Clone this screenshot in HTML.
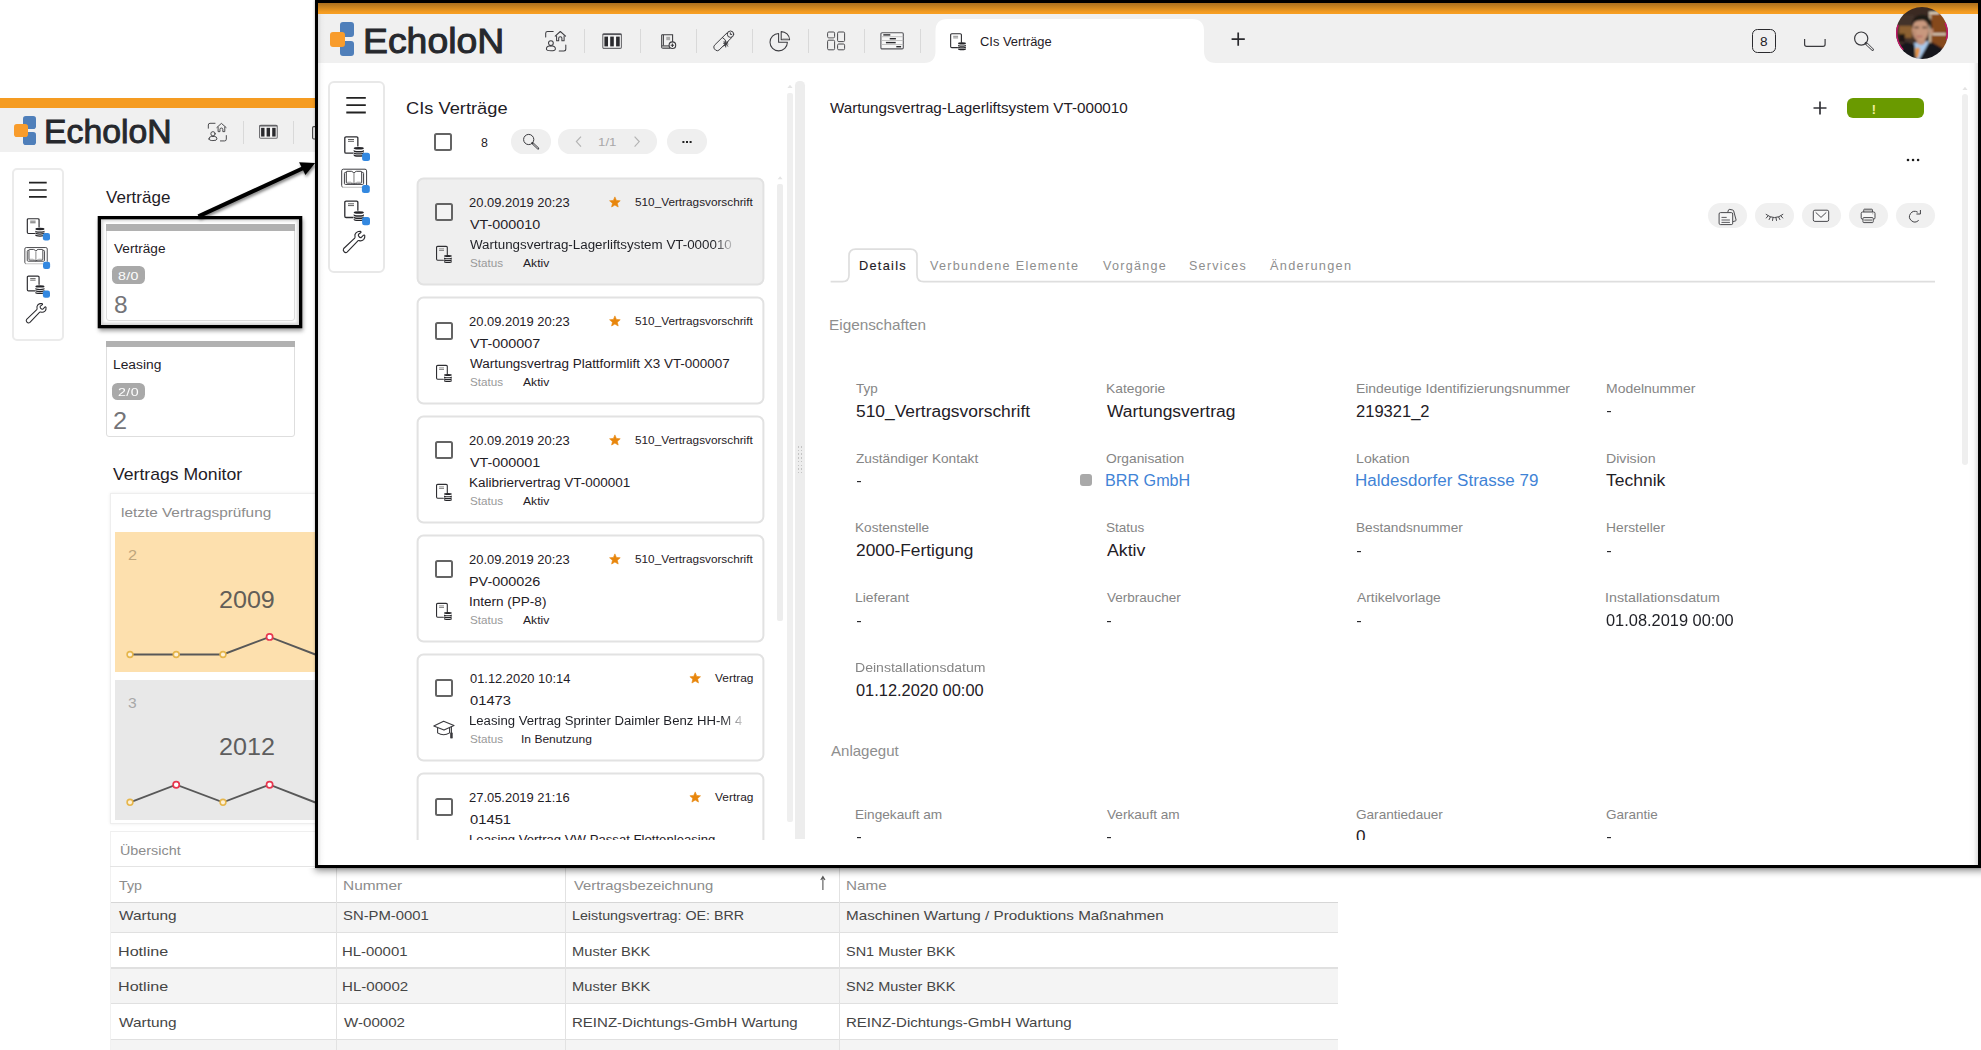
<!DOCTYPE html>
<html><head><meta charset="utf-8"><title>EcholoN</title><style>
*{margin:0;padding:0}
html,body{width:1981px;height:1050px;overflow:hidden;background:#fff}
body{position:relative;font-family:"Liberation Sans",sans-serif}
.t{position:absolute;white-space:nowrap;transform-origin:0 50%;display:block}
.r{position:absolute}
svg{position:absolute;left:0;top:0;overflow:visible}
#bg{position:absolute;left:0;top:0;width:1981px;height:1050px;overflow:hidden}
#popup{position:absolute;left:315px;top:0;width:1666px;height:868px;box-sizing:border-box;border:3px solid #000;background:#fff;overflow:hidden;box-shadow:0 0 2.5px rgba(0,0,0,.3)}
#pshw{position:absolute;left:295px;top:868px;width:1686px;height:30px;overflow:hidden}
#pshw div{position:absolute;left:21px;top:-20px;width:1670px;height:20px;box-shadow:0 2px 7px 1px rgba(0,0,0,.42)}
#pin{position:absolute;left:-318px;top:-3px;width:1981px;height:1050px}
#clip{position:absolute;left:0;top:0;width:1981px;height:839.5px;overflow:hidden}
</style></head><body>
<div id="bg">
<div class="r" style="left:0.00px;top:98.00px;width:316.00px;height:9.50px;background:#f59c22;"></div>
<div class="r" style="left:0.00px;top:107.60px;width:316.00px;height:44.20px;background:#f0f0f0;"></div>
<div class="r" style="left:23.20px;top:115.70px;width:13.20px;height:13.30px;background:#4f7fba;border-radius:2.8px;"></div>
<div class="r" style="left:23.20px;top:132.20px;width:13.20px;height:12.90px;background:#4f7fba;border-radius:2.8px;"></div>
<div class="r" style="left:14.40px;top:123.90px;width:13.20px;height:13.40px;background:#f89c2c;border-radius:2.8px;"></div>
<span class="t" style="left:43.98px;top:105px;font-size:32.3px;line-height:52px;height:52px;color:#26282d;-webkit-text-stroke:0.9px #26282d;transform:translateY(0.50px) scaleX(1.0453);">EcholoN</span>
<div class="r" style="left:242.90px;top:120.50px;width:1.20px;height:23.00px;background:#d9d9d9;"></div>
<div class="r" style="left:293.00px;top:120.50px;width:1.20px;height:23.00px;background:#d9d9d9;"></div>
<div class="r" style="left:12.40px;top:168.30px;width:51.50px;height:172.50px;background:#fff;border:2px solid #ebebeb;border-radius:5px;box-sizing:border-box;"></div>
<span class="t" style="left:105.83px;top:183px;font-size:16.2px;line-height:26px;height:26px;color:#1f2026;transform:translateY(0.70px) scaleX(1.0521);">Verträge</span>
<div class="r" style="left:105.70px;top:224.00px;width:189.30px;height:96.50px;background:#fff;border:1px solid #dedede;border-radius:3px;box-sizing:border-box;"></div>
<div class="r" style="left:105.70px;top:224.00px;width:189.30px;height:6.60px;background:#b1b1b1;"></div>
<span class="t" style="left:113.64px;top:238px;font-size:12.5px;line-height:20px;height:20px;color:#1f2026;transform:translateY(0.65px) scaleX(1.0891);">Verträge</span>
<div class="r" style="left:112.30px;top:266.20px;width:32.80px;height:17.80px;background:#a9a9a9;border-radius:5.5px;"></div>
<span class="t" style="left:118.29px;top:267px;font-size:10.6px;line-height:17px;height:17px;color:#fdfdfd;letter-spacing:0.3px;transform:translateY(0.50px) scaleX(1.3346);">8/0</span>
<span class="t" style="left:113.64px;top:286px;font-size:23.2px;line-height:37px;height:37px;color:#747478;transform:translateY(0.70px) scaleX(1.0563);">8</span>
<div class="r" style="left:105.70px;top:340.50px;width:189.30px;height:96.50px;background:#fff;border:1px solid #dedede;border-radius:3px;box-sizing:border-box;"></div>
<div class="r" style="left:105.70px;top:340.50px;width:189.30px;height:6.60px;background:#b1b1b1;"></div>
<span class="t" style="left:112.57px;top:355px;font-size:12.5px;line-height:20px;height:20px;color:#1f2026;transform:translateY(0.15px) scaleX(1.1035);">Leasing</span>
<div class="r" style="left:112.30px;top:382.70px;width:32.80px;height:17.80px;background:#a9a9a9;border-radius:5.5px;"></div>
<span class="t" style="left:118.18px;top:384px;font-size:10.6px;line-height:17px;height:17px;color:#fdfdfd;letter-spacing:0.3px;transform:translateY(0.00px) scaleX(1.3414);">2/0</span>
<span class="t" style="left:113.43px;top:403px;font-size:23.2px;line-height:37px;height:37px;color:#747478;transform:translateY(0.20px) scaleX(1.0880);">2</span>
<div class="r" style="left:98.00px;top:216.40px;width:204.00px;height:111.60px;box-shadow:1px 3px 4px rgba(0,0,0,.38), inset 0 0 3px 5px rgba(0,0,0,.17);"></div>
<span class="t" style="left:112.52px;top:461px;font-size:15.9px;line-height:25px;height:25px;color:#1f2026;transform:translateY(0.80px) scaleX(1.1073);">Vertrags Monitor</span>
<div class="r" style="left:110.30px;top:492.80px;width:210.00px;height:331.00px;background:#fff;border:1px solid #eeeeee;box-sizing:border-box;box-shadow:0 0 3px rgba(0,0,0,.08);"></div>
<span class="t" style="left:121.46px;top:501px;font-size:13.4px;line-height:21px;height:21px;color:#8c8c8c;transform:translateY(0.90px) scaleX(1.1466);">letzte Vertragsprüfung</span>
<div class="r" style="left:114.90px;top:532.00px;width:205.00px;height:140.00px;background:#fde0ae;"></div>
<div class="r" style="left:114.90px;top:680.00px;width:205.00px;height:140.30px;background:#e8e8e8;"></div>
<span class="t" style="left:127.78px;top:542px;font-size:14.8px;line-height:24px;height:24px;color:#bfa67c;transform:translateY(0.80px) scaleX(1.0975);">2</span>
<span class="t" style="left:128.01px;top:690px;font-size:14.8px;line-height:24px;height:24px;color:#a8a8a8;transform:translateY(0.60px) scaleX(1.0545);">3</span>
<span class="t" style="left:218.74px;top:579px;font-size:24.4px;line-height:39px;height:39px;color:#625e58;transform:translateY(0.80px) scaleX(1.0289);">2009</span>
<span class="t" style="left:218.74px;top:727px;font-size:24.4px;line-height:39px;height:39px;color:#5e5e5e;transform:translateY(0.40px) scaleX(1.0303);">2012</span>
<div class="r" style="left:110.30px;top:830.80px;width:1230.00px;height:230.00px;background:#fff;border-top:1px solid #efefef;border-left:1px solid #f1f1f1;box-sizing:border-box;"></div>
<span class="t" style="left:120.49px;top:839px;font-size:13.0px;line-height:21px;height:21px;color:#8c8c8c;transform:translateY(0.90px) scaleX(1.1039);">Übersicht</span>
<div class="r" style="left:110.30px;top:865.50px;width:1228.00px;height:1.20px;background:#e4e4e4;"></div>
<div class="r" style="left:111.30px;top:902.30px;width:1226.70px;height:29.90px;background:#f4f4f4;"></div>
<div class="r" style="left:111.30px;top:901.60px;width:1226.70px;height:1.40px;background:#d6d6d6;"></div>
<div class="r" style="left:111.30px;top:931.50px;width:1226.70px;height:1.40px;background:#e0e0e0;"></div>
<div class="r" style="left:111.30px;top:967.90px;width:1226.70px;height:35.60px;background:#f4f4f4;"></div>
<div class="r" style="left:111.30px;top:967.20px;width:1226.70px;height:1.90px;background:#e0e0e0;"></div>
<div class="r" style="left:111.30px;top:1002.80px;width:1226.70px;height:1.40px;background:#e0e0e0;"></div>
<div class="r" style="left:111.30px;top:1039.30px;width:1226.70px;height:35.70px;background:#f4f4f4;"></div>
<div class="r" style="left:111.30px;top:1038.60px;width:1226.70px;height:1.40px;background:#e0e0e0;"></div>
<div class="r" style="left:336.00px;top:867.00px;width:1.20px;height:190.00px;background:#e2e2e2;"></div>
<div class="r" style="left:565.00px;top:867.00px;width:1.20px;height:190.00px;background:#e2e2e2;"></div>
<div class="r" style="left:838.80px;top:867.00px;width:1.20px;height:190.00px;background:#e2e2e2;"></div>
<span class="t" style="left:118.98px;top:874px;font-size:13.4px;line-height:21px;height:21px;color:#8c8c8c;transform:translateY(0.50px) scaleX(1.0610);">Typ</span>
<span class="t" style="left:342.53px;top:874px;font-size:13.4px;line-height:21px;height:21px;color:#8c8c8c;transform:translateY(0.50px) scaleX(1.1529);">Nummer</span>
<span class="t" style="left:573.73px;top:874px;font-size:13.4px;line-height:21px;height:21px;color:#8c8c8c;transform:translateY(0.50px) scaleX(1.1066);">Vertragsbezeichnung</span>
<span class="t" style="left:845.75px;top:874px;font-size:13.4px;line-height:21px;height:21px;color:#8c8c8c;transform:translateY(0.50px) scaleX(1.1395);">Name</span>
<span class="t" style="left:119.03px;top:905px;font-size:13.4px;line-height:21px;height:21px;color:#454545;transform:translateY(0.30px) scaleX(1.1499);">Wartung</span>
<span class="t" style="left:342.93px;top:905px;font-size:13.4px;line-height:21px;height:21px;color:#454545;transform:translateY(0.30px) scaleX(1.1091);">SN-PM-0001</span>
<span class="t" style="left:572.43px;top:905px;font-size:13.4px;line-height:21px;height:21px;color:#454545;transform:translateY(0.30px) scaleX(1.0657);">Leistungsvertrag: OE: BRR</span>
<span class="t" style="left:845.55px;top:905px;font-size:13.4px;line-height:21px;height:21px;color:#454545;transform:translateY(0.30px) scaleX(1.1369);">Maschinen Wartung / Produktions Maßnahmen</span>
<span class="t" style="left:117.78px;top:940px;font-size:13.4px;line-height:21px;height:21px;color:#454545;transform:translateY(0.50px) scaleX(1.2045);">Hotline</span>
<span class="t" style="left:342.38px;top:940px;font-size:13.4px;line-height:21px;height:21px;color:#454545;transform:translateY(0.50px) scaleX(1.1138);">HL-00001</span>
<span class="t" style="left:572.40px;top:940px;font-size:13.4px;line-height:21px;height:21px;color:#454545;transform:translateY(0.50px) scaleX(1.0962);">Muster BKK</span>
<span class="t" style="left:846.14px;top:940px;font-size:13.4px;line-height:21px;height:21px;color:#454545;transform:translateY(0.50px) scaleX(1.0813);">SN1 Muster BKK</span>
<span class="t" style="left:117.78px;top:976px;font-size:13.4px;line-height:21px;height:21px;color:#454545;transform:translateY(0.20px) scaleX(1.2045);">Hotline</span>
<span class="t" style="left:342.36px;top:976px;font-size:13.4px;line-height:21px;height:21px;color:#454545;transform:translateY(0.20px) scaleX(1.1264);">HL-00002</span>
<span class="t" style="left:572.40px;top:976px;font-size:13.4px;line-height:21px;height:21px;color:#454545;transform:translateY(0.20px) scaleX(1.0962);">Muster BKK</span>
<span class="t" style="left:846.14px;top:976px;font-size:13.4px;line-height:21px;height:21px;color:#454545;transform:translateY(0.20px) scaleX(1.0813);">SN2 Muster BKK</span>
<span class="t" style="left:119.03px;top:1011px;font-size:13.4px;line-height:21px;height:21px;color:#454545;transform:translateY(0.80px) scaleX(1.1499);">Wartung</span>
<span class="t" style="left:343.53px;top:1011px;font-size:13.4px;line-height:21px;height:21px;color:#454545;transform:translateY(0.80px) scaleX(1.1274);">W-00002</span>
<span class="t" style="left:572.37px;top:1011px;font-size:13.4px;line-height:21px;height:21px;color:#454545;transform:translateY(0.80px) scaleX(1.1217);">REINZ-Dichtungs-GmbH Wartung</span>
<span class="t" style="left:845.57px;top:1011px;font-size:13.4px;line-height:21px;height:21px;color:#454545;transform:translateY(0.80px) scaleX(1.1217);">REINZ-Dichtungs-GmbH Wartung</span>
<svg width="1981" height="1050" viewBox="0 0 1981 1050"><rect x="99.35" y="217.65" width="201.3" height="109" fill="none" stroke="#000" stroke-width="3.3"/>
<g fill="none" stroke="#222" stroke-width="1.7">
<path d="M29 182.7H46.7M29 190H46.7M29 196.9H46.7"/>
</g>
<polyline fill="none" stroke="#585858" stroke-width="1.9" points="130,654.5 176.2,654.5 223,654.5 269.6,636.9 318,655.5"/><circle cx="130" cy="654.5" r="2.9" fill="#fdf0d6" stroke="#e6b64c" stroke-width="1.6"/><circle cx="176.2" cy="654.5" r="2.9" fill="#fdf0d6" stroke="#e6b64c" stroke-width="1.6"/><circle cx="223" cy="654.5" r="2.9" fill="#fdf0d6" stroke="#e6b64c" stroke-width="1.6"/><circle cx="269.6" cy="636.9" r="3.1" fill="#fff" stroke="#e8364e" stroke-width="1.7"/><polyline fill="none" stroke="#585858" stroke-width="1.9" points="130,802.3 176.2,784.7 223,802.3 269.6,784.7 318,803.5"/><circle cx="130" cy="802.3" r="2.9" fill="#fdf0d6" stroke="#e6b64c" stroke-width="1.6"/><circle cx="176.2" cy="784.7" r="3.1" fill="#fff" stroke="#e8364e" stroke-width="1.7"/><circle cx="223" cy="802.3" r="2.9" fill="#fdf0d6" stroke="#e6b64c" stroke-width="1.6"/><circle cx="269.6" cy="784.7" r="3.1" fill="#fff" stroke="#e8364e" stroke-width="1.7"/><g style="filter:drop-shadow(1.5px 2.5px 1.6px rgba(0,0,0,.5))"><path d="M198.4 216.4 L303.5 168.0" stroke="#000" stroke-width="4" fill="none"/><path d="M315.2 163 L299.1 162.2 L305.4 175.1 Z" fill="#000"/></g><path d="M822.9 890 V877.5 M820.8 880 L822.9 876.5 L825 880" stroke="#555" stroke-width="1.1" fill="none"/><g transform="translate(26.6,218.0) scale(0.9)"><path d="M13.85 9.9 V2.1 Q13.85 0.8 12.55 0.8 H2.1 Q0.8 0.8 0.8 2.1 V15.9 Q0.8 17.2 2.1 17.2 H8.9" fill="none" stroke="#2c2c30" stroke-width="1.3" stroke-linecap="round"/>
<path d="M4 3.5H10M4 5.3H10" stroke="#555" stroke-width="0.95" fill="none"/>
<ellipse cx="14.8" cy="12.25" rx="5.1" ry="1.3" fill="#242428"/><path d="M9.700000000000001 13.8 a5.1 1.25 0 0 0 10.2 0 v1.4 a5.1 1.25 0 0 1 -10.2 0z" fill="#242428"/><path d="M9.700000000000001 15.95 a5.1 1.25 0 0 0 10.2 0 v1.4 a5.1 1.25 0 0 1 -10.2 0z" fill="#242428"/><path d="M9.700000000000001 18.1 a5.1 1.25 0 0 0 10.2 0 v1.45 a5.1 1.25 0 0 1 -10.2 0z" fill="#242428"/><rect x="18.1" y="16.8" width="7.9" height="8.1" rx="2.5" fill="#3388e0"/></g><g transform="translate(24.2,247.0) scale(0.9)"><path d="M1.6 18.5 Q0.7 18.3 0.7 17 V2.2 Q0.7 0.6 2.3 0.6 H24 Q25.6 0.6 25.6 2.2 V16.4" fill="none" stroke="#3c3c40" stroke-width="1.0"/>
<path d="M1.6 18.65H21" stroke="#b8b8b8" stroke-width="0.9"/>
<path d="M5.2 3.8 H4.4 Q3.4 3.8 3.4 4.8 V14.8 Q3.4 15.8 4.4 15.8 H21.6 Q22.6 15.8 22.6 14.8 V4.8 Q22.6 3.8 21.6 3.8 H20.8" fill="none" stroke="#3c3c40" stroke-width="1.0"/>
<path d="M5.3 3.4 Q5.3 2.7 6 2.7 H10.4 Q11.7 2.7 12.95 4.7 Q14.2 2.7 15.5 2.7 H20 Q20.7 2.7 20.7 3.4 V13.6 Q20.7 14.5 19.8 14.5 H16.2 Q14.2 14.5 12.95 15.4 Q11.7 14.5 9.7 14.5 H6.2 Q5.3 14.5 5.3 13.6 Z" fill="none" stroke="#3c3c40" stroke-width="1.0" stroke-linejoin="round"/>
<path d="M12.95 5.2 V14.4" stroke="#a8a8a8" stroke-width="1.5" fill="none"/>
<path d="M6.4 13.4H10M15.8 13.4H19.6" stroke="#c4c4c4" stroke-width="0.9"/>
<rect x="20.9" y="16.4" width="7.9" height="8.0" rx="2.5" fill="#3388e0"/>
</g><g transform="translate(26.6,275.4) scale(0.9)"><path d="M13.85 9.9 V2.1 Q13.85 0.8 12.55 0.8 H2.1 Q0.8 0.8 0.8 2.1 V15.9 Q0.8 17.2 2.1 17.2 H8.9" fill="none" stroke="#2c2c30" stroke-width="1.3" stroke-linecap="round"/>
<path d="M4 3.5H10M4 5.3H10" stroke="#555" stroke-width="0.95" fill="none"/>
<ellipse cx="14.8" cy="12.25" rx="5.1" ry="1.3" fill="#242428"/><path d="M9.700000000000001 13.8 a5.1 1.25 0 0 0 10.2 0 v1.4 a5.1 1.25 0 0 1 -10.2 0z" fill="#242428"/><path d="M9.700000000000001 15.95 a5.1 1.25 0 0 0 10.2 0 v1.4 a5.1 1.25 0 0 1 -10.2 0z" fill="#242428"/><path d="M9.700000000000001 18.1 a5.1 1.25 0 0 0 10.2 0 v1.45 a5.1 1.25 0 0 1 -10.2 0z" fill="#242428"/><rect x="18.1" y="16.8" width="7.9" height="8.1" rx="2.5" fill="#3388e0"/></g><g transform="translate(26.0,303.2) scale(0.92)"><path d="M11.7 7.05 C12.6 6.0 11.6 4.9 12.0 3.5 C12.6 1.6 14.0 0.7 15.2 0.45 L17.3 0.4 Q18.2 0.6 17.9 1.5 L15.6 3.2 Q14.9 4.2 15.8 5.3 Q16.8 6.7 18.1 6.6 L20.5 4.2 Q21.5 3.6 21.8 4.7 Q22.1 7.0 20.6 8.6 Q18.6 10.4 16.2 9.6 Q15.4 9.4 14.9 9.8 L4.3 20.9 Q2.6 22.4 1.0 20.6 Q-0.4 19.0 0.7 17.5 Z" fill="none" stroke="#2c2c30" stroke-width="1.15" stroke-linejoin="round"/></g><g transform="translate(207.7,122.5) scale(0.895)"><g fill="none" stroke="#3c3c40" stroke-width="1.02" stroke-linecap="round" stroke-linejoin="round">
<path d="M0.7 6.4 V2.8 Q0.7 0.9 2.6 0.9 H8.2"/>
<path d="M20.8 14.6 V18.6 Q20.8 20.6 18.8 20.6 H14.2"/>
<path d="M10.2 5.6 L15.3 1.0 L20.6 5.6"/>
<path d="M11.6 5.2 V10.2 H13.7 V7.6 Q13.7 6.2 15.3 6.2 Q16.9 6.2 16.9 7.6 V10.2 H19.1 V5.2"/>
<circle cx="5.9" cy="12.6" r="2.4"/>
<path d="M1.4 18.4 Q1.4 15.6 4.6 15.4 Q5.9 16.2 7.2 15.4 Q10.4 15.6 10.4 18.4 Q10.4 20.2 5.9 20.2 Q1.4 20.2 1.4 18.4 Z"/>
</g></g><g transform="translate(259.0,124.8) scale(0.95,0.89)"><rect x="0.6" y="0.6" width="18.6" height="14.6" rx="1.2" fill="#f6f6f6" stroke="#6a6a6e" stroke-width="1.1"/>
<path d="M0.6 1.2H19.2" stroke="#55555a" stroke-width="1.4"/>
<rect x="2.2" y="3.4" width="3.6" height="9.8" fill="#2a2a2e"/>
<rect x="8.0" y="3.4" width="3.6" height="9.8" fill="#2a2a2e"/>
<rect x="13.9" y="3.4" width="3.6" height="9.8" fill="#2a2a2e"/></g><path d="M315 126.6 H313.8 Q312.6 126.6 312.6 127.8 V137.8 Q312.6 139 313.8 139 H315" fill="none" stroke="#444" stroke-width="1.1"/></svg>
</div>
<div id="pshw"><div></div></div>
<div id="popup"><div id="pin">
<div class="r" style="left:318.00px;top:3.00px;width:1660.00px;height:11.00px;background:linear-gradient(#ab6f1e 0%,#c9831f 35%,#f39b21 80%,#f7a025 100%);"></div>
<div class="r" style="left:318.00px;top:14.00px;width:1660.00px;height:49.00px;background:#f0f0f0;"></div>
<svg width="1981" height="1050" viewBox="0 0 1981 1050"><path d="M924 63 Q935.5 63 935.5 51 V31 Q935.5 19 947.5 19 H1192 Q1204 19 1204 31 V51 Q1204 63 1216 63 Z" fill="#fff"/></svg>
<div class="r" style="left:340.00px;top:22.30px;width:14.30px;height:14.30px;background:#4f7fba;border-radius:3.0px;"></div>
<div class="r" style="left:340.00px;top:41.10px;width:14.30px;height:14.70px;background:#4f7fba;border-radius:3.0px;"></div>
<div class="r" style="left:330.00px;top:31.80px;width:14.90px;height:14.90px;background:#f89c2c;border-radius:3.0px;"></div>
<span class="t" style="left:363.13px;top:12px;font-size:35.6px;line-height:57px;height:57px;color:#26282d;-webkit-text-stroke:1.0px #26282d;transform:translateY(0.60px) scaleX(1.0502);">EcholoN</span>
<div class="r" style="left:584.00px;top:29.00px;width:1.20px;height:24.40px;background:#d9d9d9;"></div>
<div class="r" style="left:640.00px;top:29.00px;width:1.20px;height:24.40px;background:#d9d9d9;"></div>
<div class="r" style="left:696.00px;top:29.00px;width:1.20px;height:24.40px;background:#d9d9d9;"></div>
<div class="r" style="left:752.00px;top:29.00px;width:1.20px;height:24.40px;background:#d9d9d9;"></div>
<div class="r" style="left:808.00px;top:29.00px;width:1.20px;height:24.40px;background:#d9d9d9;"></div>
<div class="r" style="left:864.00px;top:29.00px;width:1.20px;height:24.40px;background:#d9d9d9;"></div>
<div class="r" style="left:920.00px;top:29.00px;width:1.20px;height:24.40px;background:#d9d9d9;"></div>
<span class="t" style="left:979.94px;top:32px;font-size:12.0px;line-height:19px;height:19px;color:#1f2026;transform:translateY(0.80px) scaleX(1.0754);">CIs Verträge</span>
<div class="r" style="left:1751.80px;top:29.00px;width:24.40px;height:24.00px;border:1.4px solid #2a2a2e;border-radius:5.5px;box-sizing:border-box;"></div>
<span class="t" style="left:1760.21px;top:31px;font-size:12.2px;line-height:20px;height:20px;color:#1f2026;transform:translateY(0.80px) scaleX(1.1179);">8</span>
<div class="r" style="left:327.80px;top:80.50px;width:57.70px;height:192.50px;background:#fff;border:2px solid #e8e8e8;border-radius:6px;box-sizing:border-box;"></div>
<div class="r" style="left:1968.00px;top:63.00px;width:10.00px;height:803.00px;background:linear-gradient(90deg,rgba(0,0,0,0) 0%,rgba(0,0,0,.02) 55%,rgba(0,0,0,.13) 100%);"></div>
<div class="r" style="left:318.00px;top:14.00px;width:7.00px;height:852.00px;background:linear-gradient(90deg,rgba(0,0,0,.10) 0%,rgba(0,0,0,.02) 50%,rgba(0,0,0,0) 100%);"></div>
<svg width="1981" height="1050" viewBox="0 0 1981 1050"><g transform="translate(545,30.5) scale(1)"><g fill="none" stroke="#3c3c40" stroke-width="1.02" stroke-linecap="round" stroke-linejoin="round">
<path d="M0.7 6.4 V2.8 Q0.7 0.9 2.6 0.9 H8.2"/>
<path d="M20.8 14.6 V18.6 Q20.8 20.6 18.8 20.6 H14.2"/>
<path d="M10.2 5.6 L15.3 1.0 L20.6 5.6"/>
<path d="M11.6 5.2 V10.2 H13.7 V7.6 Q13.7 6.2 15.3 6.2 Q16.9 6.2 16.9 7.6 V10.2 H19.1 V5.2"/>
<circle cx="5.9" cy="12.6" r="2.4"/>
<path d="M1.4 18.4 Q1.4 15.6 4.6 15.4 Q5.9 16.2 7.2 15.4 Q10.4 15.6 10.4 18.4 Q10.4 20.2 5.9 20.2 Q1.4 20.2 1.4 18.4 Z"/>
</g></g><g transform="translate(602.2,33.2) scale(1)"><rect x="0.6" y="0.6" width="18.6" height="14.6" rx="1.2" fill="#f6f6f6" stroke="#6a6a6e" stroke-width="1.1"/>
<path d="M0.6 1.2H19.2" stroke="#55555a" stroke-width="1.4"/>
<rect x="2.2" y="3.4" width="3.6" height="9.8" fill="#2a2a2e"/>
<rect x="8.0" y="3.4" width="3.6" height="9.8" fill="#2a2a2e"/>
<rect x="13.9" y="3.4" width="3.6" height="9.8" fill="#2a2a2e"/></g><g transform="translate(661,34) scale(1)"><path d="M0.7 0.7 H11.6 V10 M9 14.2 H2 Q0.7 14.2 0.7 12.9 V0.7" fill="none" stroke="#3a3a3e" stroke-width="1.05"/>
<path d="M2.4 0.9 V11.6" stroke="#3a3a3e" stroke-width="1"/>
<path d="M0.9 11.9 H8.5" stroke="#3a3a3e" stroke-width="1"/>
<rect x="1.2" y="12.2" width="7.4" height="1.6" fill="#9a9a9a"/>
<rect x="5.3" y="2.8" width="3.8" height="3.4" fill="#aaa"/>
<circle cx="11.4" cy="11.2" r="3.3" fill="#f4f4f4" stroke="#3a3a3e" stroke-width="1.1"/>
<path d="M9.7 11.2H13.1M11.4 9.5V12.9" stroke="#3a3a3e" stroke-width="1.1"/></g><g transform="translate(712.9,30.6) scale(1)"><g fill="none" stroke="#3c3c40" stroke-width="1.0" stroke-linejoin="round" stroke-linecap="round">
<path d="M14.2 2.2 L1.6 14.6 Q0.2 16.2 1.4 18.2 L2.8 19.6 Q4.6 20.8 6.2 19.4 L18.8 7.0"/>
<ellipse cx="17.6" cy="3.6" rx="3.2" ry="3.2"/>
<path d="M17.4 2.2 V3.8 H18.8"/>
<path d="M9.6 7 Q12 8 13.2 11"/>
<path d="M10.6 12.6 L15 13.4 M12.4 10.6 L12.8 16.4 M11 15.4 L15.2 11.4 M11.2 11 L14.8 15.6"/>
</g></g><g transform="translate(770,30.9) scale(1)"><g fill="none" stroke="#3c3c40" stroke-width="1.05" stroke-linejoin="round">
<path d="M8.6 2.6 A8.7 8.7 0 1 0 17.4 11.4 H8.6 Z"/>
<path d="M11.2 0.7 A8.4 8.4 0 0 1 19.6 8.8 H11.2 Z"/>
</g>
<path d="M12.4 7.8 H18.4" stroke="#aaa" stroke-width="0.9"/></g><g transform="translate(827,31.4) scale(1)"><g fill="none" stroke="#4a4a4e" stroke-width="1.0">
<rect x="0.6" y="0.6" width="7" height="5.8" rx="1.2"/>
<rect x="0.6" y="8.8" width="7" height="9.6" rx="1.2"/>
<rect x="10.6" y="0.6" width="7" height="9.6" rx="1.2"/>
<rect x="10.6" y="12.6" width="7" height="5.8" rx="1.2"/>
</g>
<path d="M1.4 6.2H6.8M11.4 12.9H16.8" stroke="#9a9a9a" stroke-width="0.9"/></g><g transform="translate(880.3,32.1) scale(1)"><rect x="0.6" y="0.6" width="22.4" height="16.2" rx="1.2" fill="#f7f7f7" stroke="#55555a" stroke-width="1.1"/>
<path d="M0.8 4.6H23M0.8 8.4H23M0.8 12.4H23" stroke="#b5b5b5" stroke-width="0.8"/>
<path d="M3 2.8H10" stroke="#2a2a2e" stroke-width="1.4"/>
<path d="M9.4 6.6H15.6" stroke="#2a2a2e" stroke-width="1.4"/>
<path d="M5.6 10.5H15.4" stroke="#2a2a2e" stroke-width="1.4"/>
<path d="M16 14.6H20.8" stroke="#2a2a2e" stroke-width="1.4"/></g><g transform="translate(950.1,33.2)"><path d="M11.3 9 V1.7 Q11.3 0.55 10.15 0.55 H1.7 Q0.55 0.55 0.55 1.7 V13.3 Q0.55 14.45 1.7 14.45 H7.4" fill="none" stroke="#2e2e32" stroke-width="1.1" stroke-linecap="round"/>
<path d="M3.1 3.1H8M3.1 4.7H8" stroke="#777" stroke-width="0.85" fill="none"/>
<ellipse cx="11.9" cy="10.2" rx="3.9" ry="1.05" fill="#242428"/><path d="M8.0 11.4 a3.9 0.95 0 0 0 7.8 0 v1.2 a3.9 0.95 0 0 1 -7.8 0z" fill="#242428"/><path d="M8.0 13.15 a3.9 0.95 0 0 0 7.8 0 v1.2 a3.9 0.95 0 0 1 -7.8 0z" fill="#242428"/><path d="M8.0 14.9 a3.9 0.95 0 0 0 7.8 0 v1.25 a3.9 0.95 0 0 1 -7.8 0z" fill="#242428"/></g><path d="M1231.6 39.2H1244.8M1238.2 32.6V45.8" stroke="#2a2a2e" stroke-width="1.7"/><path d="M1804.6 39 V44.2 Q1804.6 46.3 1806.7 46.3 H1823 Q1825.1 46.3 1825.1 44.2 V39" fill="none" stroke="#3a3a3e" stroke-width="1.2"/><circle cx="1861.2" cy="38.6" r="6.6" fill="none" stroke="#3a3a3e" stroke-width="1.2"/><path d="M1865.95 43.18L1872.6 49.6" stroke="#3a3a3e" stroke-width="2.64" stroke-linecap="round"/><path d="M1867.03 44.22L1872.38 49.39" stroke="#f2f2f2" stroke-width="1.14" stroke-linecap="round"/><defs><clipPath id="avc"><circle cx="26" cy="26" r="26"/></clipPath><filter id="avb" x="-10%" y="-10%" width="120%" height="120%"><feGaussianBlur stdDeviation="0.8"/></filter></defs>
<g transform="translate(1896,6.9)" clip-path="url(#avc)"><g filter="url(#avb)">
<rect x="-2" y="-2" width="56" height="56" fill="#3a2a22"/>
<rect x="-2" y="8" width="20" height="30" fill="#43302a"/>
<rect x="3" y="19" width="13" height="12" fill="#8c6030"/>
<rect x="3" y="27" width="6" height="8" fill="#1a1412"/>
<rect x="33" y="6" width="18" height="42" fill="#86481f"/>
<rect x="33" y="5" width="10" height="2.2" fill="#e8dcc8"/>
<rect x="36" y="26.4" width="14" height="1.8" fill="#e8e0d0"/>
<rect x="33" y="8" width="2.2" height="36" fill="#c8b8a0"/>
<path d="M18 36 L32.6 34 L32 44 L23 57 L18.4 50 Z" fill="#a9c9ec"/>
<path d="M19.6 41 L23.2 40.6 L23.8 43.4 L22 51 L19.4 50 Z" fill="#e8902e"/>
<path d="M-2 42 L10 35 L18.6 37.5 L19.4 50 L23 56 H-2 Z" fill="#17151a"/>
<path d="M22.4 54 L32.6 36 L36 35.4 L46 41 L54 46 V58 H22 Z" fill="#17151a"/>
<ellipse cx="25" cy="34" rx="4.6" ry="4" fill="#c09078"/>
<ellipse cx="24.4" cy="23.4" rx="8.4" ry="11" fill="#c8987e"/>
<ellipse cx="35.4" cy="24.6" rx="1.8" ry="3.4" fill="#c09078"/>
<path d="M15.8 19 Q16 8.4 26 7.8 Q35.6 8 36 18 Q36 22 34.6 22.4 Q33.6 16 30 13.6 Q23 12.6 17.8 15.4 Q16.4 17 16.6 21 Z" fill="#1f1a18"/>
<path d="M18 20.6 H23 M26.4 20.6 H31" stroke="#4a3428" stroke-width="1.6"/>
<path d="M20.6 29.6 H26.4" stroke="#b06060" stroke-width="1.4"/>
<path d="M17 24 Q17 34 24 34.6 Q20 30 19.6 22 Z" fill="#b8866c" opacity=".6"/>
</g>
<path d="M1.9 18 A25.4 25.4 0 0 0 7.1 43 M49.3 16 A25.4 25.4 0 0 1 50.4 33" fill="none" stroke="#c41468" stroke-width="1.8"/>
</g><path d="M346.3 97.9h19.5M346.3 105.2h19.5M346.3 112.5h19.5" stroke="#222" stroke-width="1.8" fill="none"/><g transform="translate(344,136) scale(1)"><path d="M13.85 9.9 V2.1 Q13.85 0.8 12.55 0.8 H2.1 Q0.8 0.8 0.8 2.1 V15.9 Q0.8 17.2 2.1 17.2 H8.9" fill="none" stroke="#2c2c30" stroke-width="1.3" stroke-linecap="round"/>
<path d="M4 3.5H10M4 5.3H10" stroke="#555" stroke-width="0.95" fill="none"/>
<ellipse cx="14.8" cy="12.25" rx="5.1" ry="1.3" fill="#242428"/><path d="M9.700000000000001 13.8 a5.1 1.25 0 0 0 10.2 0 v1.4 a5.1 1.25 0 0 1 -10.2 0z" fill="#242428"/><path d="M9.700000000000001 15.95 a5.1 1.25 0 0 0 10.2 0 v1.4 a5.1 1.25 0 0 1 -10.2 0z" fill="#242428"/><path d="M9.700000000000001 18.1 a5.1 1.25 0 0 0 10.2 0 v1.45 a5.1 1.25 0 0 1 -10.2 0z" fill="#242428"/><rect x="18.1" y="16.8" width="7.9" height="8.1" rx="2.5" fill="#3388e0"/></g><g transform="translate(341,168.6) scale(1)"><path d="M1.6 18.5 Q0.7 18.3 0.7 17 V2.2 Q0.7 0.6 2.3 0.6 H24 Q25.6 0.6 25.6 2.2 V16.4" fill="none" stroke="#3c3c40" stroke-width="1.0"/>
<path d="M1.6 18.65H21" stroke="#b8b8b8" stroke-width="0.9"/>
<path d="M5.2 3.8 H4.4 Q3.4 3.8 3.4 4.8 V14.8 Q3.4 15.8 4.4 15.8 H21.6 Q22.6 15.8 22.6 14.8 V4.8 Q22.6 3.8 21.6 3.8 H20.8" fill="none" stroke="#3c3c40" stroke-width="1.0"/>
<path d="M5.3 3.4 Q5.3 2.7 6 2.7 H10.4 Q11.7 2.7 12.95 4.7 Q14.2 2.7 15.5 2.7 H20 Q20.7 2.7 20.7 3.4 V13.6 Q20.7 14.5 19.8 14.5 H16.2 Q14.2 14.5 12.95 15.4 Q11.7 14.5 9.7 14.5 H6.2 Q5.3 14.5 5.3 13.6 Z" fill="none" stroke="#3c3c40" stroke-width="1.0" stroke-linejoin="round"/>
<path d="M12.95 5.2 V14.4" stroke="#a8a8a8" stroke-width="1.5" fill="none"/>
<path d="M6.4 13.4H10M15.8 13.4H19.6" stroke="#c4c4c4" stroke-width="0.9"/>
<rect x="20.9" y="16.4" width="7.9" height="8.0" rx="2.5" fill="#3388e0"/>
</g><g transform="translate(344,200.3) scale(1)"><path d="M13.85 9.9 V2.1 Q13.85 0.8 12.55 0.8 H2.1 Q0.8 0.8 0.8 2.1 V15.9 Q0.8 17.2 2.1 17.2 H8.9" fill="none" stroke="#2c2c30" stroke-width="1.3" stroke-linecap="round"/>
<path d="M4 3.5H10M4 5.3H10" stroke="#555" stroke-width="0.95" fill="none"/>
<ellipse cx="14.8" cy="12.25" rx="5.1" ry="1.3" fill="#242428"/><path d="M9.700000000000001 13.8 a5.1 1.25 0 0 0 10.2 0 v1.4 a5.1 1.25 0 0 1 -10.2 0z" fill="#242428"/><path d="M9.700000000000001 15.95 a5.1 1.25 0 0 0 10.2 0 v1.4 a5.1 1.25 0 0 1 -10.2 0z" fill="#242428"/><path d="M9.700000000000001 18.1 a5.1 1.25 0 0 0 10.2 0 v1.45 a5.1 1.25 0 0 1 -10.2 0z" fill="#242428"/><rect x="18.1" y="16.8" width="7.9" height="8.1" rx="2.5" fill="#3388e0"/></g><g transform="translate(343,231) scale(1)"><path d="M11.7 7.05 C12.6 6.0 11.6 4.9 12.0 3.5 C12.6 1.6 14.0 0.7 15.2 0.45 L17.3 0.4 Q18.2 0.6 17.9 1.5 L15.6 3.2 Q14.9 4.2 15.8 5.3 Q16.8 6.7 18.1 6.6 L20.5 4.2 Q21.5 3.6 21.8 4.7 Q22.1 7.0 20.6 8.6 Q18.6 10.4 16.2 9.6 Q15.4 9.4 14.9 9.8 L4.3 20.9 Q2.6 22.4 1.0 20.6 Q-0.4 19.0 0.7 17.5 Z" fill="none" stroke="#2c2c30" stroke-width="1.15" stroke-linejoin="round"/></g></svg>
<div id="clip">
<div class="r" style="left:777.20px;top:184.00px;width:5.80px;height:436.50px;background:#ededed;border-radius:2px;"></div>
<div class="r" style="left:787.00px;top:92.70px;width:6.00px;height:729.30px;background:#efefef;border-radius:2px;"></div>
<div class="r" style="left:795.40px;top:81.30px;width:9.30px;height:757.70px;background:#ededed;border-radius:4.6px 4.6px 0 0;"></div>
<div class="r" style="left:797.60px;top:446.00px;width:1.20px;height:1.60px;background:#c4c4c4;"></div>
<div class="r" style="left:800.60px;top:446.00px;width:1.20px;height:1.60px;background:#c4c4c4;"></div>
<div class="r" style="left:797.60px;top:449.70px;width:1.20px;height:1.60px;background:#c4c4c4;"></div>
<div class="r" style="left:800.60px;top:449.70px;width:1.20px;height:1.60px;background:#c4c4c4;"></div>
<div class="r" style="left:797.60px;top:453.40px;width:1.20px;height:1.60px;background:#c4c4c4;"></div>
<div class="r" style="left:800.60px;top:453.40px;width:1.20px;height:1.60px;background:#c4c4c4;"></div>
<div class="r" style="left:797.60px;top:457.10px;width:1.20px;height:1.60px;background:#c4c4c4;"></div>
<div class="r" style="left:800.60px;top:457.10px;width:1.20px;height:1.60px;background:#c4c4c4;"></div>
<div class="r" style="left:797.60px;top:460.80px;width:1.20px;height:1.60px;background:#c4c4c4;"></div>
<div class="r" style="left:800.60px;top:460.80px;width:1.20px;height:1.60px;background:#c4c4c4;"></div>
<div class="r" style="left:797.60px;top:464.50px;width:1.20px;height:1.60px;background:#c4c4c4;"></div>
<div class="r" style="left:800.60px;top:464.50px;width:1.20px;height:1.60px;background:#c4c4c4;"></div>
<div class="r" style="left:797.60px;top:468.20px;width:1.20px;height:1.60px;background:#c4c4c4;"></div>
<div class="r" style="left:800.60px;top:468.20px;width:1.20px;height:1.60px;background:#c4c4c4;"></div>
<div class="r" style="left:797.60px;top:471.90px;width:1.20px;height:1.60px;background:#c4c4c4;"></div>
<div class="r" style="left:800.60px;top:471.90px;width:1.20px;height:1.60px;background:#c4c4c4;"></div>
<div class="r" style="left:1962.00px;top:94.00px;width:6.00px;height:371.00px;background:#efefef;border-radius:3px;"></div>
<span class="t" style="left:405.97px;top:94px;font-size:16.9px;line-height:27px;height:27px;color:#1f2026;transform:translateY(0.70px) scaleX(1.0820);">CIs Verträge</span>
<div class="r" style="left:434.10px;top:133.20px;width:17.90px;height:17.70px;background:#fff;border:2px solid #646464;border-radius:2.5px;box-sizing:border-box;"></div>
<span class="t" style="left:481.06px;top:133px;font-size:11.9px;line-height:19px;height:19px;color:#1f2026;transform:translateY(0.80px) scaleX(1.0387);">8</span>
<div class="r" style="left:511.20px;top:129.30px;width:39.40px;height:24.50px;background:#efefef;border-radius:12.3px;"></div>
<div class="r" style="left:558.40px;top:129.30px;width:98.50px;height:24.50px;background:#efefef;border-radius:12.3px;"></div>
<div class="r" style="left:667.00px;top:129.30px;width:39.80px;height:24.50px;background:#efefef;border-radius:12.3px;"></div>
<span class="t" style="left:597.79px;top:132px;font-size:11.4px;line-height:18px;height:18px;color:#a8a8a8;transform:translateY(0.90px) scaleX(1.1648);">1/1</span>
<div class="r" style="left:417.00px;top:178.00px;width:347.00px;height:107.00px;background:#efefef;border-radius:6px;"></div>
<div class="r" style="left:435.20px;top:203.30px;width:17.80px;height:17.40px;background:#f4f4f4;border:2px solid #646464;border-radius:2.5px;box-sizing:border-box;"></div>
<span class="t" style="left:469.35px;top:193px;font-size:12.1px;line-height:19px;height:19px;color:#1f2026;transform:translateY(0.70px) scaleX(1.0692);">20.09.2019 20:23</span>
<span class="t" style="left:634.73px;top:193px;font-size:11.0px;line-height:18px;height:18px;color:#1f2026;transform:translateY(0.20px) scaleX(1.0700);">510_Vertragsvorschrift</span>
<span class="t" style="left:470.14px;top:213px;font-size:13.4px;line-height:21px;height:21px;color:#1f2026;transform:translateY(0.70px) scaleX(1.0711);">VT-000010</span>
<span class="t" style="left:470.14px;top:235px;font-size:12.0px;line-height:19px;height:19px;color:#1f2026;transform:translateY(0.60px) scaleX(1.1140);-webkit-mask-image:linear-gradient(90deg,#000 0 93%,rgba(0,0,0,0.25) 100%);mask-image:linear-gradient(90deg,#000 0 93%,rgba(0,0,0,0.25) 100%);">Wartungsvertrag-Lagerliftsystem VT-000010</span>
<span class="t" style="left:469.67px;top:254px;font-size:10.6px;line-height:17px;height:17px;color:#9a9a9a;transform:translateY(0.70px) scaleX(1.1032);">Status</span>
<span class="t" style="left:522.58px;top:254px;font-size:10.6px;line-height:17px;height:17px;color:#1f2026;transform:translateY(0.70px) scaleX(1.1434);">Aktiv</span>
<div class="r" style="left:435.20px;top:322.30px;width:17.80px;height:17.40px;background:#fff;border:2px solid #646464;border-radius:2.5px;box-sizing:border-box;"></div>
<span class="t" style="left:469.35px;top:312px;font-size:12.1px;line-height:19px;height:19px;color:#1f2026;transform:translateY(0.70px) scaleX(1.0692);">20.09.2019 20:23</span>
<span class="t" style="left:634.73px;top:312px;font-size:11.0px;line-height:18px;height:18px;color:#1f2026;transform:translateY(0.20px) scaleX(1.0700);">510_Vertragsvorschrift</span>
<span class="t" style="left:470.14px;top:332px;font-size:13.4px;line-height:21px;height:21px;color:#1f2026;transform:translateY(0.70px) scaleX(1.0736);">VT-000007</span>
<span class="t" style="left:470.14px;top:354px;font-size:12.0px;line-height:19px;height:19px;color:#1f2026;transform:translateY(0.60px) scaleX(1.1212);">Wartungsvertrag Plattformlift X3 VT-000007</span>
<span class="t" style="left:469.67px;top:373px;font-size:10.6px;line-height:17px;height:17px;color:#9a9a9a;transform:translateY(0.70px) scaleX(1.1032);">Status</span>
<span class="t" style="left:522.58px;top:373px;font-size:10.6px;line-height:17px;height:17px;color:#1f2026;transform:translateY(0.70px) scaleX(1.1434);">Aktiv</span>
<div class="r" style="left:435.20px;top:441.30px;width:17.80px;height:17.40px;background:#fff;border:2px solid #646464;border-radius:2.5px;box-sizing:border-box;"></div>
<span class="t" style="left:469.35px;top:431px;font-size:12.1px;line-height:19px;height:19px;color:#1f2026;transform:translateY(0.70px) scaleX(1.0692);">20.09.2019 20:23</span>
<span class="t" style="left:634.73px;top:431px;font-size:11.0px;line-height:18px;height:18px;color:#1f2026;transform:translateY(0.20px) scaleX(1.0700);">510_Vertragsvorschrift</span>
<span class="t" style="left:470.14px;top:451px;font-size:13.4px;line-height:21px;height:21px;color:#1f2026;transform:translateY(0.70px) scaleX(1.0732);">VT-000001</span>
<span class="t" style="left:469.09px;top:473px;font-size:12.0px;line-height:19px;height:19px;color:#1f2026;transform:translateY(0.60px) scaleX(1.1252);">Kalibriervertrag VT-000001</span>
<span class="t" style="left:469.67px;top:492px;font-size:10.6px;line-height:17px;height:17px;color:#9a9a9a;transform:translateY(0.70px) scaleX(1.1032);">Status</span>
<span class="t" style="left:522.58px;top:492px;font-size:10.6px;line-height:17px;height:17px;color:#1f2026;transform:translateY(0.70px) scaleX(1.1434);">Aktiv</span>
<div class="r" style="left:435.20px;top:560.30px;width:17.80px;height:17.40px;background:#fff;border:2px solid #646464;border-radius:2.5px;box-sizing:border-box;"></div>
<span class="t" style="left:469.35px;top:550px;font-size:12.1px;line-height:19px;height:19px;color:#1f2026;transform:translateY(0.70px) scaleX(1.0692);">20.09.2019 20:23</span>
<span class="t" style="left:634.73px;top:550px;font-size:11.0px;line-height:18px;height:18px;color:#1f2026;transform:translateY(0.20px) scaleX(1.0700);">510_Vertragsvorschrift</span>
<span class="t" style="left:469.02px;top:570px;font-size:13.4px;line-height:21px;height:21px;color:#1f2026;transform:translateY(0.70px) scaleX(1.0769);">PV-000026</span>
<span class="t" style="left:468.95px;top:592px;font-size:12.0px;line-height:19px;height:19px;color:#1f2026;transform:translateY(0.60px) scaleX(1.1266);">Intern (PP-8)</span>
<span class="t" style="left:469.67px;top:611px;font-size:10.6px;line-height:17px;height:17px;color:#9a9a9a;transform:translateY(0.70px) scaleX(1.1032);">Status</span>
<span class="t" style="left:522.58px;top:611px;font-size:10.6px;line-height:17px;height:17px;color:#1f2026;transform:translateY(0.70px) scaleX(1.1434);">Aktiv</span>
<div class="r" style="left:435.20px;top:679.30px;width:17.80px;height:17.40px;background:#fff;border:2px solid #646464;border-radius:2.5px;box-sizing:border-box;"></div>
<span class="t" style="left:469.50px;top:669px;font-size:12.1px;line-height:19px;height:19px;color:#1f2026;transform:translateY(0.70px) scaleX(1.0656);">01.12.2020 10:14</span>
<span class="t" style="left:714.75px;top:669px;font-size:11.0px;line-height:18px;height:18px;color:#1f2026;transform:translateY(0.20px) scaleX(1.0833);">Vertrag</span>
<span class="t" style="left:469.62px;top:689px;font-size:13.4px;line-height:21px;height:21px;color:#1f2026;transform:translateY(0.70px) scaleX(1.1009);">01473</span>
<span class="t" style="left:469.12px;top:711px;font-size:12.0px;line-height:19px;height:19px;color:#1f2026;transform:translateY(0.60px) scaleX(1.0955);-webkit-mask-image:linear-gradient(90deg,#000 0 93%,rgba(0,0,0,0.25) 100%);mask-image:linear-gradient(90deg,#000 0 93%,rgba(0,0,0,0.25) 100%);">Leasing Vertrag Sprinter Daimler Benz HH-M 4</span>
<span class="t" style="left:469.67px;top:730px;font-size:10.6px;line-height:17px;height:17px;color:#9a9a9a;transform:translateY(0.70px) scaleX(1.1032);">Status</span>
<span class="t" style="left:521.49px;top:730px;font-size:10.6px;line-height:17px;height:17px;color:#1f2026;transform:translateY(0.70px) scaleX(1.1363);">In Benutzung</span>
<div class="r" style="left:435.20px;top:798.30px;width:17.80px;height:17.40px;background:#fff;border:2px solid #646464;border-radius:2.5px;box-sizing:border-box;"></div>
<span class="t" style="left:469.35px;top:788px;font-size:12.1px;line-height:19px;height:19px;color:#1f2026;transform:translateY(0.70px) scaleX(1.0692);">27.05.2019 21:16</span>
<span class="t" style="left:714.75px;top:788px;font-size:11.0px;line-height:18px;height:18px;color:#1f2026;transform:translateY(0.20px) scaleX(1.0833);">Vertrag</span>
<span class="t" style="left:469.62px;top:808px;font-size:13.4px;line-height:21px;height:21px;color:#1f2026;transform:translateY(0.70px) scaleX(1.1029);">01451</span>
<span class="t" style="left:469.12px;top:830px;font-size:12.0px;line-height:19px;height:19px;color:#1f2026;transform:translateY(0.60px) scaleX(1.0962);">Leasing Vertrag VW Passat Flottenleasing</span>
<span class="t" style="left:469.67px;top:849px;font-size:10.6px;line-height:17px;height:17px;color:#9a9a9a;transform:translateY(0.70px) scaleX(1.1032);">Status</span>
<span class="t" style="left:521.49px;top:849px;font-size:10.6px;line-height:17px;height:17px;color:#1f2026;transform:translateY(0.70px) scaleX(1.1363);">In Benutzung</span>
<span class="t" style="left:829.93px;top:96px;font-size:14.6px;line-height:23px;height:23px;color:#1f2026;transform:translateY(0.70px) scaleX(1.0418);">Wartungsvertrag-Lagerliftsystem VT-000010</span>
<div class="r" style="left:1846.90px;top:97.90px;width:77.10px;height:20.00px;background:#6a9a00;border-radius:6px;"></div>
<span class="t" style="left:1871.72px;top:99px;font-size:12.5px;line-height:20px;height:20px;color:#f4f0a0;font-weight:bold;transform:translateY(0.70px) scaleX(1.0000);">!</span>
<div class="r" style="left:1707.60px;top:203.00px;width:39.20px;height:25.00px;background:#f0f0f0;border-radius:12.5px;"></div>
<div class="r" style="left:1754.60px;top:203.00px;width:39.20px;height:25.00px;background:#f0f0f0;border-radius:12.5px;"></div>
<div class="r" style="left:1801.60px;top:203.00px;width:39.20px;height:25.00px;background:#f0f0f0;border-radius:12.5px;"></div>
<div class="r" style="left:1848.60px;top:203.00px;width:39.20px;height:25.00px;background:#f0f0f0;border-radius:12.5px;"></div>
<div class="r" style="left:1895.60px;top:203.00px;width:39.20px;height:25.00px;background:#f0f0f0;border-radius:12.5px;"></div>
<span class="t" style="left:859.25px;top:256px;font-size:11.9px;line-height:19px;height:19px;color:#1f2026;letter-spacing:1.2px;-webkit-text-stroke:0.12px #1f2026;transform:translateY(0.70px) scaleX(1.0719);">Details</span>
<span class="t" style="left:930.24px;top:256px;font-size:11.9px;line-height:19px;height:19px;color:#8e8e8e;letter-spacing:1.2px;transform:translateY(0.70px) scaleX(1.0627);">Verbundene Elemente</span>
<span class="t" style="left:1102.74px;top:256px;font-size:11.9px;line-height:19px;height:19px;color:#8e8e8e;letter-spacing:1.2px;transform:translateY(0.70px) scaleX(1.0583);">Vorgänge</span>
<span class="t" style="left:1189.03px;top:256px;font-size:11.9px;line-height:19px;height:19px;color:#8e8e8e;letter-spacing:1.2px;transform:translateY(0.70px) scaleX(1.0497);">Services</span>
<span class="t" style="left:1270.18px;top:256px;font-size:11.9px;line-height:19px;height:19px;color:#8e8e8e;letter-spacing:1.2px;transform:translateY(0.70px) scaleX(1.0728);">Änderungen</span>
<span class="t" style="left:829.34px;top:312px;font-size:14.8px;line-height:24px;height:24px;color:#8e8e8e;transform:translateY(0.80px) scaleX(1.0357);">Eigenschaften</span>
<span class="t" style="left:830.57px;top:738px;font-size:14.8px;line-height:24px;height:24px;color:#8e8e8e;transform:translateY(0.90px) scaleX(1.0162);">Anlagegut</span>
<span class="t" style="left:856.20px;top:379px;font-size:11.9px;line-height:19px;height:19px;color:#858585;transform:translateY(0.80px) scaleX(1.1296);">Typ</span>
<span class="t" style="left:855.70px;top:398px;font-size:15.8px;line-height:25px;height:25px;color:#1f2026;transform:translateY(0.60px) scaleX(1.1015);">510_Vertragsvorschrift</span>
<span class="t" style="left:1105.66px;top:379px;font-size:11.9px;line-height:19px;height:19px;color:#858585;transform:translateY(0.80px) scaleX(1.1631);">Kategorie</span>
<span class="t" style="left:1106.62px;top:398px;font-size:15.8px;line-height:25px;height:25px;color:#1f2026;transform:translateY(0.60px) scaleX(1.1058);">Wartungsvertrag</span>
<span class="t" style="left:1355.66px;top:379px;font-size:11.9px;line-height:19px;height:19px;color:#858585;transform:translateY(0.80px) scaleX(1.1688);">Eindeutige Identifizierungsnummer</span>
<span class="t" style="left:1355.87px;top:398px;font-size:15.8px;line-height:25px;height:25px;color:#1f2026;transform:translateY(0.60px) scaleX(1.0464);">219321_2</span>
<span class="t" style="left:1605.65px;top:379px;font-size:11.9px;line-height:19px;height:19px;color:#858585;transform:translateY(0.80px) scaleX(1.1752);">Modelnummer</span>
<div class="r" style="left:1607.00px;top:411.00px;width:4.00px;height:1.00px;background:#2a2a2e;box-shadow:0 0.5px 0 rgba(42,42,46,.35);"></div>
<span class="t" style="left:856.07px;top:449px;font-size:11.9px;line-height:19px;height:19px;color:#858585;transform:translateY(0.60px) scaleX(1.1486);">Zuständiger Kontakt</span>
<div class="r" style="left:857.00px;top:481.00px;width:4.00px;height:1.00px;background:#2a2a2e;box-shadow:0 0.5px 0 rgba(42,42,46,.35);"></div>
<span class="t" style="left:1106.15px;top:449px;font-size:11.9px;line-height:19px;height:19px;color:#858585;transform:translateY(0.60px) scaleX(1.1612);">Organisation</span>
<span class="t" style="left:1105.38px;top:468px;font-size:15.8px;line-height:25px;height:25px;color:#3f83d6;transform:translateY(0.40px) scaleX(1.0221);">BRR GmbH</span>
<span class="t" style="left:1355.64px;top:449px;font-size:11.9px;line-height:19px;height:19px;color:#858585;transform:translateY(0.60px) scaleX(1.1909);">Lokation</span>
<span class="t" style="left:1355.30px;top:468px;font-size:15.8px;line-height:25px;height:25px;color:#3f83d6;transform:translateY(0.40px) scaleX(1.0764);">Haldesdorfer Strasse 79</span>
<span class="t" style="left:1605.64px;top:449px;font-size:11.9px;line-height:19px;height:19px;color:#858585;transform:translateY(0.60px) scaleX(1.1901);">Division</span>
<span class="t" style="left:1606.31px;top:468px;font-size:15.8px;line-height:25px;height:25px;color:#1f2026;transform:translateY(0.40px) scaleX(1.1082);">Technik</span>
<span class="t" style="left:855.38px;top:519px;font-size:11.9px;line-height:19px;height:19px;color:#858585;transform:translateY(0.40px) scaleX(1.1449);">Kostenstelle</span>
<span class="t" style="left:855.53px;top:538px;font-size:15.8px;line-height:25px;height:25px;color:#1f2026;transform:translateY(0.20px) scaleX(1.0963);">2000-Fertigung</span>
<span class="t" style="left:1106.18px;top:519px;font-size:11.9px;line-height:19px;height:19px;color:#858585;transform:translateY(0.40px) scaleX(1.1384);">Status</span>
<span class="t" style="left:1106.67px;top:538px;font-size:15.8px;line-height:25px;height:25px;color:#1f2026;transform:translateY(0.20px) scaleX(1.1214);">Aktiv</span>
<span class="t" style="left:1355.68px;top:519px;font-size:11.9px;line-height:19px;height:19px;color:#858585;transform:translateY(0.40px) scaleX(1.1467);">Bestandsnummer</span>
<div class="r" style="left:1357.00px;top:551.00px;width:4.00px;height:1.00px;background:#2a2a2e;box-shadow:0 0.5px 0 rgba(42,42,46,.35);"></div>
<span class="t" style="left:1605.67px;top:519px;font-size:11.9px;line-height:19px;height:19px;color:#858585;transform:translateY(0.40px) scaleX(1.1599);">Hersteller</span>
<div class="r" style="left:1607.00px;top:551.00px;width:4.00px;height:1.00px;background:#2a2a2e;box-shadow:0 0.5px 0 rgba(42,42,46,.35);"></div>
<span class="t" style="left:855.36px;top:589px;font-size:11.9px;line-height:19px;height:19px;color:#858585;transform:translateY(0.20px) scaleX(1.1713);">Lieferant</span>
<div class="r" style="left:857.00px;top:621.00px;width:4.00px;height:1.00px;background:#2a2a2e;box-shadow:0 0.5px 0 rgba(42,42,46,.35);"></div>
<span class="t" style="left:1106.74px;top:589px;font-size:11.9px;line-height:19px;height:19px;color:#858585;transform:translateY(0.20px) scaleX(1.1381);">Verbraucher</span>
<div class="r" style="left:1107.00px;top:621.00px;width:4.00px;height:1.00px;background:#2a2a2e;box-shadow:0 0.5px 0 rgba(42,42,46,.35);"></div>
<span class="t" style="left:1356.77px;top:589px;font-size:11.9px;line-height:19px;height:19px;color:#858585;transform:translateY(0.20px) scaleX(1.1629);">Artikelvorlage</span>
<div class="r" style="left:1357.00px;top:621.00px;width:4.00px;height:1.00px;background:#2a2a2e;box-shadow:0 0.5px 0 rgba(42,42,46,.35);"></div>
<span class="t" style="left:1605.48px;top:589px;font-size:11.9px;line-height:19px;height:19px;color:#858585;transform:translateY(0.20px) scaleX(1.1985);">Installationsdatum</span>
<span class="t" style="left:1606.06px;top:608px;font-size:15.8px;line-height:25px;height:25px;color:#1f2026;transform:translateY(0.00px) scaleX(1.0380);">01.08.2019 00:00</span>
<span class="t" style="left:855.35px;top:659px;font-size:11.9px;line-height:19px;height:19px;color:#858585;transform:translateY(0.00px) scaleX(1.1821);">Deinstallationsdatum</span>
<span class="t" style="left:855.76px;top:677px;font-size:15.8px;line-height:25px;height:25px;color:#1f2026;transform:translateY(0.80px) scaleX(1.0380);">01.12.2020 00:00</span>
<div class="r" style="left:1080.00px;top:474.00px;width:12.00px;height:12.00px;background:#a9a9a9;border-radius:3px;"></div>
<span class="t" style="left:855.38px;top:805px;font-size:11.9px;line-height:19px;height:19px;color:#858585;transform:translateY(0.60px) scaleX(1.1465);">Eingekauft am</span>
<div class="r" style="left:857.00px;top:837.00px;width:4.00px;height:1.00px;background:#2a2a2e;box-shadow:0 0.5px 0 rgba(42,42,46,.35);"></div>
<span class="t" style="left:1106.74px;top:805px;font-size:11.9px;line-height:19px;height:19px;color:#858585;transform:translateY(0.60px) scaleX(1.1458);">Verkauft am</span>
<div class="r" style="left:1107.00px;top:837.00px;width:4.00px;height:1.00px;background:#2a2a2e;box-shadow:0 0.5px 0 rgba(42,42,46,.35);"></div>
<span class="t" style="left:1356.12px;top:805px;font-size:11.9px;line-height:19px;height:19px;color:#858585;transform:translateY(0.60px) scaleX(1.1423);">Garantiedauer</span>
<span class="t" style="left:1356.03px;top:824px;font-size:15.8px;line-height:25px;height:25px;color:#1f2026;transform:translateY(0.40px) scaleX(1.0856);">0</span>
<span class="t" style="left:1606.12px;top:805px;font-size:11.9px;line-height:19px;height:19px;color:#858585;transform:translateY(0.60px) scaleX(1.1344);">Garantie</span>
<div class="r" style="left:1607.00px;top:837.00px;width:4.00px;height:1.00px;background:#2a2a2e;box-shadow:0 0.5px 0 rgba(42,42,46,.35);"></div>
<svg width="1981" height="1050" viewBox="0 0 1981 1050"><path d="M787.4 88 L790 84.8 L792.6 88 Z M777.6 179.3 L780.1 176.2 L782.6 179.3 Z M1962.4 90 L1965 86.8 L1967.6 90 Z" fill="#e4e4e4"/><circle cx="528.7" cy="139.5" r="5.1" fill="none" stroke="#3a3a3e" stroke-width="1.0"/><path d="M532.38 143.03L538.1 148.5" stroke="#3a3a3e" stroke-width="2.20" stroke-linecap="round"/><path d="M533.47 144.06L537.88 148.29" stroke="#f2f2f2" stroke-width="0.95" stroke-linecap="round"/><path d="M581 136.6 L576.4 141.6 L581 146.6 M634.6 136.6 L639.2 141.6 L634.6 146.6" fill="none" stroke="#b4b4b4" stroke-width="1.2"/><rect x="682.4" y="141" width="2" height="2" fill="#222"/><rect x="686.0" y="141" width="2" height="2" fill="#222"/><rect x="689.6" y="141" width="2" height="2" fill="#222"/><rect x="417.6" y="178.55" width="345.8" height="105.9" rx="6" fill="none" stroke="#e2e2e2" stroke-width="2"/><polygon points="614.90,196.90 616.41,200.42 620.23,200.77 617.35,203.30 618.19,207.03 614.90,205.08 611.61,207.03 612.45,203.30 609.57,200.77 613.39,200.42" fill="#e8860c" stroke="#e8860c" stroke-width="0.6" stroke-linejoin="round"/><g transform="translate(436.0,245.8)"><path d="M11.3 9 V1.7 Q11.3 0.55 10.15 0.55 H1.7 Q0.55 0.55 0.55 1.7 V13.3 Q0.55 14.45 1.7 14.45 H7.4" fill="none" stroke="#2e2e32" stroke-width="1.1" stroke-linecap="round"/>
<path d="M3.1 3.1H8M3.1 4.7H8" stroke="#777" stroke-width="0.85" fill="none"/>
<ellipse cx="11.9" cy="10.2" rx="3.9" ry="1.05" fill="#242428"/><path d="M8.0 11.4 a3.9 0.95 0 0 0 7.8 0 v1.2 a3.9 0.95 0 0 1 -7.8 0z" fill="#242428"/><path d="M8.0 13.15 a3.9 0.95 0 0 0 7.8 0 v1.2 a3.9 0.95 0 0 1 -7.8 0z" fill="#242428"/><path d="M8.0 14.9 a3.9 0.95 0 0 0 7.8 0 v1.25 a3.9 0.95 0 0 1 -7.8 0z" fill="#242428"/></g><rect x="417.6" y="297.55" width="345.8" height="105.9" rx="6" fill="none" stroke="#e2e2e2" stroke-width="2"/><polygon points="614.90,315.90 616.41,319.42 620.23,319.77 617.35,322.30 618.19,326.03 614.90,324.08 611.61,326.03 612.45,322.30 609.57,319.77 613.39,319.42" fill="#e8860c" stroke="#e8860c" stroke-width="0.6" stroke-linejoin="round"/><g transform="translate(436.0,364.8)"><path d="M11.3 9 V1.7 Q11.3 0.55 10.15 0.55 H1.7 Q0.55 0.55 0.55 1.7 V13.3 Q0.55 14.45 1.7 14.45 H7.4" fill="none" stroke="#2e2e32" stroke-width="1.1" stroke-linecap="round"/>
<path d="M3.1 3.1H8M3.1 4.7H8" stroke="#777" stroke-width="0.85" fill="none"/>
<ellipse cx="11.9" cy="10.2" rx="3.9" ry="1.05" fill="#242428"/><path d="M8.0 11.4 a3.9 0.95 0 0 0 7.8 0 v1.2 a3.9 0.95 0 0 1 -7.8 0z" fill="#242428"/><path d="M8.0 13.15 a3.9 0.95 0 0 0 7.8 0 v1.2 a3.9 0.95 0 0 1 -7.8 0z" fill="#242428"/><path d="M8.0 14.9 a3.9 0.95 0 0 0 7.8 0 v1.25 a3.9 0.95 0 0 1 -7.8 0z" fill="#242428"/></g><rect x="417.6" y="416.55" width="345.8" height="105.9" rx="6" fill="none" stroke="#e2e2e2" stroke-width="2"/><polygon points="614.90,434.90 616.41,438.42 620.23,438.77 617.35,441.30 618.19,445.03 614.90,443.08 611.61,445.03 612.45,441.30 609.57,438.77 613.39,438.42" fill="#e8860c" stroke="#e8860c" stroke-width="0.6" stroke-linejoin="round"/><g transform="translate(436.0,483.8)"><path d="M11.3 9 V1.7 Q11.3 0.55 10.15 0.55 H1.7 Q0.55 0.55 0.55 1.7 V13.3 Q0.55 14.45 1.7 14.45 H7.4" fill="none" stroke="#2e2e32" stroke-width="1.1" stroke-linecap="round"/>
<path d="M3.1 3.1H8M3.1 4.7H8" stroke="#777" stroke-width="0.85" fill="none"/>
<ellipse cx="11.9" cy="10.2" rx="3.9" ry="1.05" fill="#242428"/><path d="M8.0 11.4 a3.9 0.95 0 0 0 7.8 0 v1.2 a3.9 0.95 0 0 1 -7.8 0z" fill="#242428"/><path d="M8.0 13.15 a3.9 0.95 0 0 0 7.8 0 v1.2 a3.9 0.95 0 0 1 -7.8 0z" fill="#242428"/><path d="M8.0 14.9 a3.9 0.95 0 0 0 7.8 0 v1.25 a3.9 0.95 0 0 1 -7.8 0z" fill="#242428"/></g><rect x="417.6" y="535.55" width="345.8" height="105.9" rx="6" fill="none" stroke="#e2e2e2" stroke-width="2"/><polygon points="614.90,553.90 616.41,557.42 620.23,557.77 617.35,560.30 618.19,564.03 614.90,562.08 611.61,564.03 612.45,560.30 609.57,557.77 613.39,557.42" fill="#e8860c" stroke="#e8860c" stroke-width="0.6" stroke-linejoin="round"/><g transform="translate(436.0,602.8)"><path d="M11.3 9 V1.7 Q11.3 0.55 10.15 0.55 H1.7 Q0.55 0.55 0.55 1.7 V13.3 Q0.55 14.45 1.7 14.45 H7.4" fill="none" stroke="#2e2e32" stroke-width="1.1" stroke-linecap="round"/>
<path d="M3.1 3.1H8M3.1 4.7H8" stroke="#777" stroke-width="0.85" fill="none"/>
<ellipse cx="11.9" cy="10.2" rx="3.9" ry="1.05" fill="#242428"/><path d="M8.0 11.4 a3.9 0.95 0 0 0 7.8 0 v1.2 a3.9 0.95 0 0 1 -7.8 0z" fill="#242428"/><path d="M8.0 13.15 a3.9 0.95 0 0 0 7.8 0 v1.2 a3.9 0.95 0 0 1 -7.8 0z" fill="#242428"/><path d="M8.0 14.9 a3.9 0.95 0 0 0 7.8 0 v1.25 a3.9 0.95 0 0 1 -7.8 0z" fill="#242428"/></g><rect x="417.6" y="654.55" width="345.8" height="105.9" rx="6" fill="none" stroke="#e2e2e2" stroke-width="2"/><polygon points="695.20,672.90 696.71,676.42 700.53,676.77 697.65,679.30 698.49,683.03 695.20,681.08 691.91,683.03 692.75,679.30 689.87,676.77 693.69,676.42" fill="#e8860c" stroke="#e8860c" stroke-width="0.6" stroke-linejoin="round"/><g transform="translate(433,720.5) scale(1)"><g fill="none" stroke="#3a3a3e" stroke-width="1.1" stroke-linejoin="round">
<path d="M0.8 5.4 L10.6 0.8 L21 5.0 L11 9.6 Z"/>
<path d="M4.6 7.4 V12.4 Q10.6 16 16.6 12.4 V7.2"/>
<path d="M18.4 6.2 V16.6"/>
<rect x="17.5" y="12.4" width="1.9" height="5.2" fill="#3a3a3e" stroke-width="0.6"/>
</g></g><rect x="417.6" y="773.55" width="345.8" height="105.9" rx="6" fill="none" stroke="#e2e2e2" stroke-width="2"/><polygon points="695.20,791.90 696.71,795.42 700.53,795.77 697.65,798.30 698.49,802.03 695.20,800.08 691.91,802.03 692.75,798.30 689.87,795.77 693.69,795.42" fill="#e8860c" stroke="#e8860c" stroke-width="0.6" stroke-linejoin="round"/><g transform="translate(433,839.5) scale(1)"><g fill="none" stroke="#3a3a3e" stroke-width="1.1" stroke-linejoin="round">
<path d="M0.8 5.4 L10.6 0.8 L21 5.0 L11 9.6 Z"/>
<path d="M4.6 7.4 V12.4 Q10.6 16 16.6 12.4 V7.2"/>
<path d="M18.4 6.2 V16.6"/>
<rect x="17.5" y="12.4" width="1.9" height="5.2" fill="#3a3a3e" stroke-width="0.6"/>
</g></g><path d="M1813.5 108H1826.5M1820 101.4V114.6" stroke="#333338" stroke-width="1.7"/><circle cx="1908.00" cy="160" r="1.3" fill="#1c1c1c"/><circle cx="1913.05" cy="160" r="1.3" fill="#1c1c1c"/><circle cx="1918.10" cy="160" r="1.3" fill="#1c1c1c"/><path d="M830.6 281.7 H842.4 Q849 281.7 849 275.1 V256 Q849 249.2 855.8 249.2 H910.2 Q917 249.2 917 256 V275.1 Q917 281.7 923.6 281.7 H1935" fill="none" stroke="#dedede" stroke-width="1.7"/><g transform="translate(1719.1,212.6)"><g fill="none" stroke="#404044" stroke-width="0.95" stroke-linejoin="round">
<path d="M8.6 -0.2 L9.4 -2.6 Q9.7 -3.4 10.6 -3.2 L13.6 -2.6 Q14.4 -2.4 14.6 -1.6 L17 7.4 Q17.1 8 16.6 8.2 L14 9"/>
<rect x="0" y="0" width="13.6" height="12" rx="1.4" fill="#f6f6f6"/>
<path d="M2.4 4.8H7.6M2.4 7.4H10.8M2.4 9.8H10.8" stroke-width="0.85"/>
</g></g><g transform="translate(1774.5,217.6)"><g fill="none" stroke="#404044" stroke-width="0.95" stroke-linecap="round">
<path d="M-8.4 -3.2 Q0 3.4 8.4 -3.2"/>
<path d="M-6.6 -1.6 L-8.2 0.4 M-4.2 -0.4 L-5.4 2 M-1.5 0.2 L-2 2.9 M1.5 0.2 L2 2.9 M4.2 -0.4 L5.4 2 M6.6 -1.6 L8.2 0.4"/>
</g></g><g transform="translate(1813.3,210.2)"><g fill="none" stroke="#404044" stroke-width="0.95" stroke-linejoin="round">
<rect x="0" y="0" width="15.4" height="11.2" rx="1.6" fill="#f7f7f7"/>
<path d="M2.4 2.2 L7.7 7.2 L13 2.2"/>
</g></g><g transform="translate(1861.2,212)"><g fill="none" stroke="#404044" stroke-width="0.95" stroke-linejoin="round">
<path d="M2.6 0 V-2.2 Q2.6 -2.8 3.2 -2.8 H10.6 Q11.2 -2.8 11.2 -2.2 V0"/>
<path d="M3.2 -1.2H10.6" stroke="#9a9a9a" stroke-width="0.8"/>
<rect x="0" y="0" width="13.8" height="7.2" rx="1.4" fill="#f7f7f7"/>
<rect x="1.8" y="5.6" width="10.2" height="5" rx="0.8" fill="#f7f7f7"/>
<rect x="3" y="7.2" width="7.8" height="2" fill="#9a9a9a" stroke="none"/>
</g><circle cx="11.6" cy="1.8" r="0.5" fill="#888"/></g><g transform="translate(1914.8,216.6)"><g fill="none" stroke="#404044" stroke-width="1.0" stroke-linecap="round" stroke-linejoin="round">
<path d="M3.6 4.0 A5.3 5.3 0 1 1 2.6 -4.6"/>
<path d="M2.0 -2.6 H5.6 V-6.2"/>
</g></g></svg>
</div>
</div></div>
</body></html>
